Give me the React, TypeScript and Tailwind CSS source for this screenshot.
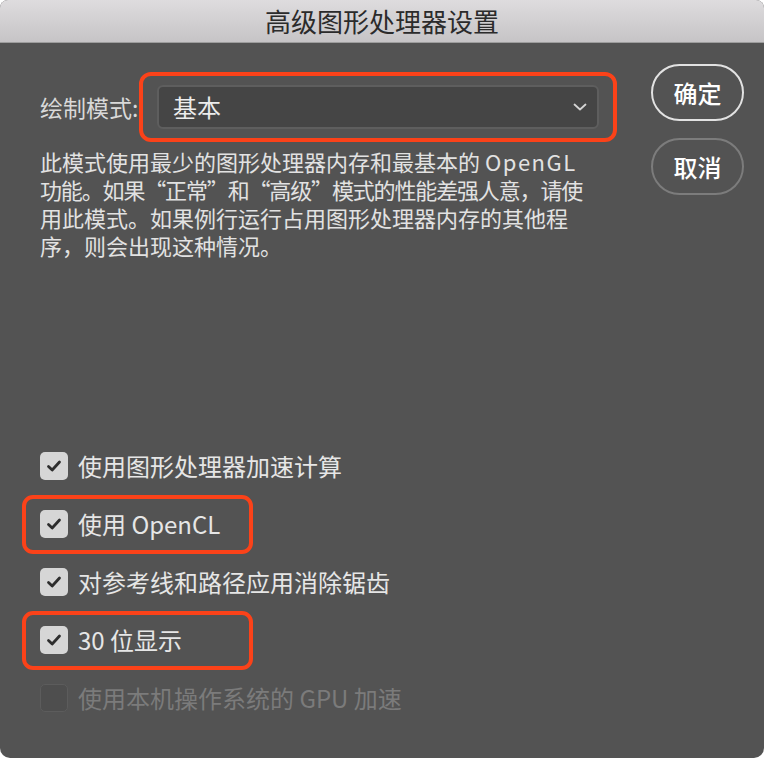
import React from "react";

const font = { fontFamily: '"Noto Sans CJK SC", "Noto Sans", sans-serif' };

function Check({ on = true, disabled = false }: { on?: boolean; disabled?: boolean }) {
  if (disabled) {
    return <div className="h-[28px] w-[28px] shrink-0 rounded-[5px] border border-[#5c5c5c] bg-[#4e4e4e]" />;
  }
  return (
    <div className="h-[28px] w-[28px] shrink-0 rounded-[5px] bg-[#d6d6d6] flex items-center justify-center">
      {on ? (
        <svg width="18" height="18" viewBox="0 0 18 18">
          <path d="M3.5 9.5 L7.2 13 L14.5 5" fill="none" stroke="#2e2e2e" strokeWidth="2.8" strokeLinecap="round" strokeLinejoin="round" />
        </svg>
      ) : null}
    </div>
  );
}

function Row({ label, mark = false, disabled = false }: { label: string; mark?: boolean; disabled?: boolean }) {
  return (
    <div className="relative flex items-center gap-[10px] h-[28px]">
      {mark ? (
        <div className="absolute left-[-18px] top-[-15px] h-[59px] w-[231px] rounded-[11px] border-[4px] border-[#fb4219]" />
      ) : null}
      <Check disabled={disabled} />
      <span className={`text-[24px] leading-none ${disabled ? "text-[#7b7b7b]" : "text-[#e6e6e6]"}`}>{label}</span>
    </div>
  );
}

export default function App() {
  return (
    <div className="h-[758px] w-[764px] bg-white" style={font}>
      <div className="flex h-full flex-col overflow-hidden rounded-t-[8px] rounded-b-[10px] bg-[#535353]">
        <div className="flex h-[43px] shrink-0 items-center justify-center border-b border-[#9d9d9d] bg-gradient-to-b from-[#dedcde] to-[#c6c4c6]">
          <span className="text-[26px] leading-none text-[#2b2b2b]">高级图形处理器设置</span>
        </div>

        <div className="flex flex-1 flex-col pl-[40px] pr-[20px]">
          <div className="flex">
            <div className="flex-1 pt-[42px]">
              <div className="flex items-center">
                <span className="w-[117px] text-[23px] leading-none text-[#d9d9d9]">绘制模式:</span>
                <div className="relative">
                  <div className="absolute left-[-18px] top-[-13px] h-[70px] w-[478px] rounded-[12px] border-[4px] border-[#fb4219]" />
                  <div className="relative flex h-[44px] w-[442px] items-center justify-between rounded-[6px] border-2 border-[#5e5e5e] bg-[#454545] pl-[14px] pr-[10px]">
                    <span className="text-[24px] leading-none text-[#ececec]">基本</span>
                    <svg width="14" height="10" viewBox="0 0 14 10">
                      <path d="M1.5 2.5 L7 7.5 L12.5 2.5" fill="none" stroke="#d4d4d4" strokeWidth="1.8" strokeLinecap="round" strokeLinejoin="round" />
                    </svg>
                  </div>
                </div>
              </div>
              <div className="mt-[18px] flex flex-col text-[22px] leading-[28px] text-[#e2e2e2]">
                <div className="h-[28px]">
                  此模式使用最少的图形处理器内存和最基本的 <span className="tracking-[1.5px]">OpenGL</span>
                </div>
                <div className="h-[28px] tracking-[-1.15px]">功能。如果“正常”和“高级”模式的性能差强人意，请使</div>
                <div className="h-[28px]">用此模式。如果例行运行占用图形处理器内存的其他程</div>
                <div className="h-[28px]">序，则会出现这种情况。</div>
              </div>
            </div>

            <div className="flex w-[93px] flex-col gap-[17px] pt-[21px]">
              <button className="flex h-[57px] w-[93px] items-center justify-center rounded-full border-2 border-[#e2e2e2] text-[24px] font-medium text-white">
                确定
              </button>
              <button className="flex h-[57px] w-[93px] items-center justify-center rounded-full border-2 border-[#7c7c7c] text-[24px] font-medium text-white">
                取消
              </button>
            </div>
          </div>

          <div className="mt-auto flex flex-col gap-[30px] pb-[46px]">
            <Row label="使用图形处理器加速计算" />
            <Row label="使用 OpenCL" mark />
            <Row label="对参考线和路径应用消除锯齿" />
            <Row label="30 位显示" mark />
            <Row label="使用本机操作系统的 GPU 加速" disabled />
          </div>
        </div>
      </div>
    </div>
  );
}
